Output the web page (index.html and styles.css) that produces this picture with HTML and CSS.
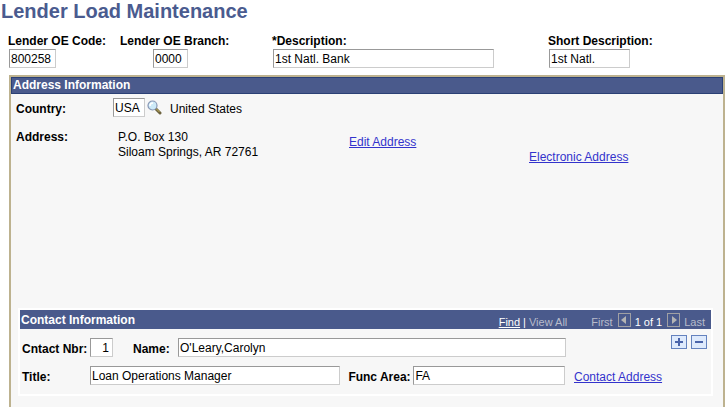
FILE: index.html
```html
<!DOCTYPE html>
<html lang="en">
<head>
    <meta charset="UTF-8">
    <meta name="viewport" content="width=device-width, initial-scale=1.0">
    <title>Lender Load Maintenance</title>
    <link rel="stylesheet" href="styles.css">
</head>
<body>

    <h1>Lender Load Maintenance</h1>

    <div class="lender">
        <div class="field">
            <label for="code">Lender OE Code:</label>
            <input type="text" id="code" class="w-code" value="800258">
        </div>
        <div class="field">
            <label for="branch">Lender OE Branch:</label>
            <input type="text" id="branch" class="w-branch" value="0000">
        </div>
        <div class="field">
            <label for="descr">*Description:</label>
            <input type="text" id="descr" class="w-descr" value="1st Natl. Bank">
        </div>
        <div class="field">
            <label for="short">Short Description:</label>
            <input type="text" id="short" class="w-short" value="1st Natl.">
        </div>
    </div>

    <div class="panel">
        <h2 class="bar">Address Information</h2>

        <div class="country">
            <label for="country">Country:</label>
            <input type="text" id="country" class="w-country" value="USA">
            <button class="lookup" aria-label="Look up Country">
                <svg width="15" height="15" viewBox="0 0 15 15">
                    <path d="M9 9l4 4" stroke="#6e6440" stroke-width="3" stroke-linecap="round"/>
                    <path d="M9 8.500l3.500 3.500" stroke="#c8b45a" stroke-width="1"/>
                    <circle cx="5.500" cy="5.500" r="4.500" fill="#cdeaf8" stroke="#8796b4" stroke-width="1.200"/>
                    <path d="M3 6a3 3 0 0 1 3-3" fill="none" stroke="#fff" stroke-width="1.500"/>
                </svg>
            </button>
            <span>United States</span>
        </div>

        <div class="address">
            <span class="label">Address:</span>
            <div class="lines">P.O. Box 130<br>Siloam Springs, AR 72761</div>
            <a class="edit" href="#">Edit Address</a>
            <a class="electronic" href="#">Electronic Address</a>
        </div>

        <div class="contact">
            <div class="contact-bar">
                <h2>Contact Information</h2>
                <div class="nav">
                    <a href="#">Find</a>
                    <span class="sep">|</span>
                    <span class="view">View All</span>
                    <span>First</span>
                    <button disabled aria-label="Previous">
                        <svg width="11" height="12" viewBox="0 0 11 12"><path d="M7 2v8L2 6z" fill="#b4b4b4"/></svg>
                    </button>
                    <span class="count">1 of 1</span>
                    <button disabled aria-label="Next">
                        <svg width="11" height="12" viewBox="0 0 11 12"><path d="M4 2v8l5-4z" fill="#b4b4b4"/></svg>
                    </button>
                    <span>Last</span>
                </div>
            </div>

            <div class="row">
                <label for="nbr" class="first">Cntact Nbr:</label>
                <input type="text" id="nbr" class="w-nbr" value="1">
                <label for="name" class="name">Name:</label>
                <input type="text" id="name" class="grow" value="O'Leary,Carolyn">
                <div class="actions">
                    <button aria-label="Add a row">
                        <svg width="14" height="12" viewBox="0 0 14 12"><path d="M3 6h8M7 2v8" stroke="#4a64aa" stroke-width="2"/></svg>
                    </button>
                    <button aria-label="Delete row">
                        <svg width="14" height="12" viewBox="0 0 14 12"><path d="M3 6h8" stroke="#4a64aa" stroke-width="2"/></svg>
                    </button>
                </div>
            </div>

            <div class="row">
                <label for="title" class="first">Title:</label>
                <input type="text" id="title" class="title" value="Loan Operations Manager">
                <label for="func" class="func-label">Func Area:</label>
                <input type="text" id="func" class="func" value="FA">
                <div class="side"><a href="#">Contact Address</a></div>
            </div>
        </div>
    </div>

</body>
</html>
```

FILE: styles.css
```css
* {
    box-sizing: border-box;
}
body {
    display: flex;
    flex-direction: column;
    min-height: 100vh;
    margin: 0;
    font-family: "Liberation Sans", Arial, sans-serif;
    font-size: 12px;
    line-height: 15px;
    color: #000;
    background: #fff;
}
h1 {
    margin: 0 0 11px 1px;
    font-size: 20px;
    line-height: 23px;
    color: #4a5b8f;
}
h2 {
    margin: 0;
    font-size: 12px;
    line-height: 15px;
    color: #fff;
}
label, .label {
    font-weight: bold;
    white-space: nowrap;
}
input {
    height: 19px;
    min-width: 0;
    margin: 0;
    padding: 0 1px;
    border: 1px solid;
    border-color: #999 #ccc #ccc #999;
    border-radius: 0;
    background: #fff;
    color: #000;
    font: inherit;
}
button {
    padding: 0;
    border: 0;
    background: none;
}
svg {
    display: block;
}
a {
    color: #3333cc;
}

/* lender fields */
.lender {
    display: grid;
    grid-template-columns: 112fr 152fr 276fr 177fr;
    padding: 0 1px 0 8px;
}
.field {
    display: flex;
    flex-direction: column;
    align-items: flex-start;
}
.field input {
    margin-left: 1px;
}
.w-code {
    width: 47px;
}
.field .w-branch {
    width: 35px;
    margin-left: 33px;
}
.w-descr {
    width: 80%;
}
.w-short {
    width: 81px;
}

/* address */
.panel {
    flex: 1;
    margin: 7px 1px 0 9px;
    border: 2px solid #bdb28f;
    border-bottom: 0;
    background: #f7f7f7;
}
.bar {
    padding-left: 1px;
    border: 1px solid #2b4075;
    background: #4a5a8c;
}
.country {
    display: flex;
    align-items: flex-end;
    padding: 4px 5px 0;
}
.country label {
    width: 97px;
}
.w-country {
    width: 32px;
}
.lookup {
    margin: 0 8px 2px 2px;
}
.address {
    display: grid;
    grid-template-columns: 102px 231fr 180fr 189fr;
    min-height: 191px;
    padding: 13px 5px 0;
}
.edit {
    padding-top: 5px;
}
.electronic {
    padding-top: 20px;
}

/* contact */
.contact {
    margin: 0 10px 12px 7px;
    padding-bottom: 9px;
    border: 2px solid #fff;
}
.contact-bar {
    display: flex;
    justify-content: space-between;
    height: 19px;
    margin-bottom: 6px;
    padding: 3px 6px 0 1px;
    background: #4a5a8c;
}
.nav {
    display: flex;
    align-items: flex-end;
    font-size: 11px;
    line-height: 13px;
    color: #b8bccb;
}
.nav a, .count, .sep {
    color: #fff;
}
.sep {
    margin: 0 3px;
}
.view {
    margin-right: 24px;
}
.nav button {
    margin: 0 4px 2px 5px;
    border: 1px solid #a0a0a4;
}
.row {
    display: flex;
    align-items: flex-end;
    margin-bottom: 9px;
    padding-left: 2px;
}
.row .first {
    width: 68px;
}
.w-nbr {
    width: 23px;
    padding-right: 3px;
    text-align: right;
}
.name {
    width: 65px;
    padding-left: 20px;
}
.grow {
    flex: 1;
}
.actions {
    display: flex;
    gap: 4px;
    justify-content: flex-end;
    width: 145px;
    padding: 0 4px 8px 0;
}
.actions button {
    border: 1px solid #6482be;
    background: #deeafc;
}
.title {
    flex: 252;
}
.func-label {
    width: 73px;
    padding-left: 8px;
}
.func {
    flex: 151;
}
.side {
    width: 146px;
    padding-left: 9px;
}
.row:last-child {
    margin-bottom: 0;
}
```
